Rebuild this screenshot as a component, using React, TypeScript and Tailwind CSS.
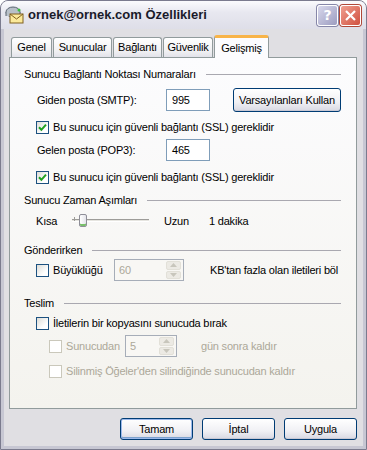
import React from 'react';

const font = "font-['Liberation_Sans',Arial,sans-serif]";

function Check({ checked = false, disabled = false }: { checked?: boolean; disabled?: boolean }) {
  return (
    <span
      className={
        disabled
          ? 'w-[13px] h-[13px] shrink-0 border border-[#cac8bb] bg-white'
          : 'w-[13px] h-[13px] shrink-0 border border-[#1c5180] bg-[linear-gradient(135deg,#dcdcd7,#ffffff_70%)] flex items-center justify-center'
      }
    >
      {checked && (
        <svg width="9" height="9" viewBox="0 0 9 9">
          <path d="M1 4.2 L3.4 6.8 L8 1.6" fill="none" stroke="#21a121" strokeWidth="2" />
        </svg>
      )}
    </span>
  );
}

function Section({ title }: { title: string }) {
  return (
    <div className="h-[14px] flex items-center gap-[10px] pr-[15px]">
      <span className="text-[#000]">{title}</span>
      <div className="flex-1 border-t border-[#a9a8b0] mt-[1px]" />
    </div>
  );
}

function Spin({ value, disabled = true, width }: { value: string; disabled?: boolean; width: string }) {
  return (
    <div className={`${width} h-[22px] border border-[#a6adb8] bg-[#f8f7f4] flex items-center justify-between pl-[4px] pr-[2px]`}>
      <span className={disabled ? 'text-[#aca899]' : 'text-black'}>{value}</span>
      <div className="w-[15px] h-[18px] flex flex-col gap-[1px]">
        <div className="flex-1 rounded-[2px] bg-[#eceae4] border border-[#e2e0d8] flex items-center justify-center">
          <svg width="7" height="4" viewBox="0 0 7 4"><path d="M0 4 L3.5 0 L7 4Z" fill="#c8c6bc" /></svg>
        </div>
        <div className="flex-1 rounded-[2px] bg-[#eceae4] border border-[#e2e0d8] flex items-center justify-center">
          <svg width="7" height="4" viewBox="0 0 7 4"><path d="M0 0 L3.5 4 L7 0Z" fill="#c8c6bc" /></svg>
        </div>
      </div>
    </div>
  );
}

function Btn({ label, def = false, width }: { label: string; def?: boolean; width: string }) {
  return (
    <button
      className={`${width} rounded-[3px] border border-[#003c74] bg-[linear-gradient(to_bottom,#ffffff,#f0f0f4_60%,#d8d8e2)] text-black leading-none whitespace-nowrap ${
        def ? 'shadow-[inset_0_0_0_1px_#9db9eb,inset_0_-1px_0_1px_#7da2ce]' : 'shadow-[inset_0_-1px_0_#c8c8d4]'
      }`}
    >
      {label}
    </button>
  );
}

const tabs = [
  { label: 'Genel', w: 'w-[41px]' },
  { label: 'Sunucular', w: 'w-[59px]' },
  { label: 'Bağlantı', w: 'w-[49px]' },
  { label: 'Güvenlik', w: 'w-[50px]' },
];

export default function App() {
  return (
    <div className={`w-[367px] h-[450px] ${font} text-[11px] tracking-[-0.2px] text-black flex flex-col rounded-t-[8px] border border-[#7b7b8e] bg-[#c7c7d3] overflow-hidden`}>
      {/* title bar */}
      <div className="h-[28px] shrink-0 flex items-center pl-[4px] pr-[5px] bg-[linear-gradient(to_bottom,#fbfbfd,#e8e8f0_40%,#dedee8)]">
        <svg width="20" height="18" viewBox="0 0 20 18" className="shrink-0">
          <ellipse cx="8" cy="6" rx="7" ry="5" fill="#b8c0c8" stroke="#5a6470" />
          <rect x="1" y="6" width="14" height="4" fill="#b8c0c8" />
          <path d="M1 6 v4 M15 6 v4" stroke="#5a6470" />
          <rect x="5" y="8" width="13" height="9" fill="#fbe99a" stroke="#806020" />
          <path d="M5 8 L11.5 13 L18 8" fill="none" stroke="#806020" />
          <circle cx="14" cy="4" r="1.5" fill="#3cc040" />
        </svg>
        <span className="ml-[3px] font-bold text-[13px] text-[#1a1a2a] tracking-[0px]">ornek@ornek.com Özellikleri</span>
        <div className="flex-1" />
        <div className="w-[21px] h-[21px] rounded-[3px] border border-white bg-[linear-gradient(135deg,#d8d8ec,#9c9cc0)] flex items-center justify-center text-white font-bold text-[14px] font-['DejaVu_Sans',sans-serif] shadow-[0_0_0_1px_#8686a8]">
          ?
        </div>
        <div className="ml-[2px] w-[21px] h-[21px] rounded-[3px] border border-white bg-[linear-gradient(135deg,#f0a090,#d05040)] flex items-center justify-center shadow-[0_0_0_1px_#b04838]">
          <svg width="11" height="11" viewBox="0 0 11 11"><path d="M1 1 L10 10 M10 1 L1 10" stroke="white" strokeWidth="2.2" /></svg>
        </div>
      </div>

      {/* body */}
      <div className="flex-1 mx-[3px] mb-[3px] bg-[#e0dfe3] flex flex-col pl-[5px] pr-[6px] pt-[6px]">
        {/* tabs */}
        <div className="h-[22px] flex items-end pl-[2px] gap-[1px]">
          {tabs.map((t) => (
            <div
              key={t.label}
              className={`${t.w} h-[20px] rounded-t-[3px] border border-b-0 border-[#919b9c] bg-[linear-gradient(to_bottom,#ffffff,#f0f0f2_70%,#e2e2ea)] flex items-center justify-center`}
            >
              {t.label}
            </div>
          ))}
          <div className="w-[55px] h-[23px] -mb-[1px] relative z-10 rounded-t-[3px] border border-b-0 border-[#919b9c] border-t-[3px] border-t-[#f8b448] bg-[#fcfcfe] flex items-center justify-center">
            Gelişmiş
          </div>
        </div>

        {/* panel */}
        <div className="h-[352px] border border-[#919b9c] bg-[linear-gradient(to_bottom,#fcfcfe,#f4f3ee)] flex flex-col pl-[14px]">
          <div className="mt-[9px]">
            <Section title="Sunucu Bağlantı Noktası Numaraları" />
          </div>

          <div className="mt-[7px] h-[24px] flex items-center pl-[13px]">
            <span className="w-[129px]">Giden posta (SMTP):</span>
            <div className="w-[44px] h-[22px] border border-[#7f9db9] bg-white flex items-center pl-[5px]">995</div>
            <div className="ml-[23px]">
              <Btn label="Varsayılanları Kullan" width="w-[108px] h-[24px]" />
            </div>
          </div>

          <div className="mt-[7px] h-[16px] flex items-center gap-[4px] pl-[12px]">
            <Check checked />
            <span>Bu sunucu için güvenli bağlantı (SSL) gereklidir</span>
          </div>

          <div className="mt-[4px] h-[22px] flex items-center pl-[13px]">
            <span className="w-[129px]">Gelen posta (POP3):</span>
            <div className="w-[44px] h-[22px] border border-[#7f9db9] bg-white flex items-center pl-[5px]">465</div>
          </div>

          <div className="mt-[8px] h-[16px] flex items-center gap-[4px] pl-[12px]">
            <Check checked />
            <span>Bu sunucu için güvenli bağlantı (SSL) gereklidir</span>
          </div>

          <div className="mt-[8px]">
            <Section title="Sunucu Zaman Aşımları" />
          </div>

          <div className="mt-[5px] h-[18px] flex items-center pl-[12px]">
            <span className="w-[36px]">Kısa</span>
            <div className="relative w-[77px] h-[18px]">
              <div className="absolute left-0 right-0 top-[7px] h-[3px] border-t border-[#9d9c99] border-b border-b-white bg-[#e6e5e0]" />
              <div className="absolute left-[2px] top-[5px] w-px h-[4px] bg-[#9d9c99]" />
              <div className="absolute left-[7px] top-[2px] w-[8px] h-[13px] rounded-[2px] border border-[#8e8e98] bg-[linear-gradient(to_right,#ffffff,#e4e4ea)] shadow-[inset_0_-2px_0_#79c06a]" />
            </div>
            <span className="ml-[15px] w-[45px]">Uzun</span>
            <span>1 dakika</span>
          </div>

          <div className="mt-[13px]">
            <Section title="Gönderirken" />
          </div>

          <div className="mt-[2px] h-[22px] flex items-center pl-[12px]">
            <Check />
            <span className="ml-[4px] w-[61px]">Büyüklüğü</span>
            <Spin value="60" width="w-[70px]" />
            <span className="ml-[26px]">KB'tan fazla olan iletileri böl</span>
          </div>

          <div className="mt-[15px]">
            <Section title="Teslim" />
          </div>

          <div className="mt-[5px] h-[16px] flex items-center gap-[4px] pl-[12px]">
            <Check />
            <span>İletilerin bir kopyasını sunucuda bırak</span>
          </div>

          <div className="mt-[4px] h-[22px] flex items-center pl-[25px] text-[#aca899]">
            <Check disabled />
            <span className="ml-[4px] w-[59px]">Sunucudan</span>
            <Spin value="5" width="w-[52px]" />
            <span className="ml-[24px]">gün sonra kaldır</span>
          </div>

          <div className="mt-[6px] h-[16px] flex items-center gap-[4px] pl-[25px] text-[#aca899]">
            <Check disabled />
            <span>Silinmiş Öğeler'den silindiğinde sunucudan kaldır</span>
          </div>
        </div>

        {/* buttons */}
        <div className="mt-[9px] flex justify-end gap-[9px]">
          <Btn label="Tamam" def width="w-[73px] h-[22px]" />
          <Btn label="İptal" width="w-[73px] h-[22px]" />
          <Btn label="Uygula" width="w-[73px] h-[22px]" />
        </div>
      </div>
    </div>
  );
}
